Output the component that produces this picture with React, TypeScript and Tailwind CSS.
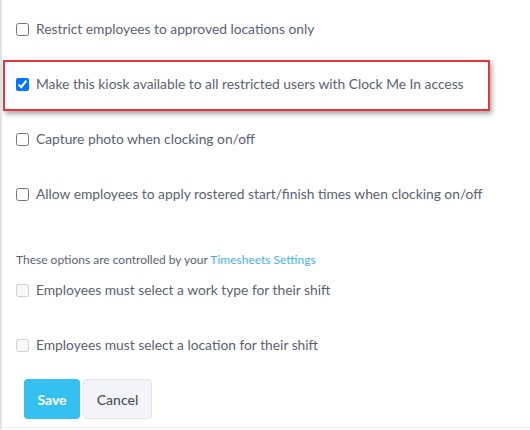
import { useState } from "react";

type Opt = { id: string; label: string; checked?: boolean; disabled?: boolean };

function CheckRow({ opt, onToggle }: { opt: Opt; onToggle: () => void }) {
  return (
    <label className="flex items-center h-5 gap-[7px] cursor-pointer">
      <input
        type="checkbox"
        checked={!!opt.checked}
        disabled={opt.disabled}
        onChange={onToggle}
        className="w-[13px] h-[13px] m-0 shrink-0"
      />
      <span className="text-[13.8px] text-[#5b6270]">{opt.label}</span>
    </label>
  );
}

export default function App() {
  const [opts, setOpts] = useState<Record<string, boolean>>({
    restrict: false,
    kiosk: true,
    photo: false,
    rostered: false,
    worktype: false,
    location: false,
  });
  const toggle = (k: string) => setOpts((o) => ({ ...o, [k]: !o[k] }));

  return (
    <div
      className="w-[530px] h-[430px] bg-white border-l-2 border-[#e3e3e3] overflow-hidden"
      style={{ fontFamily: "Lato, 'Open Sans', sans-serif" }}
    >
      <div className="h-[428px] border-b border-[#ececec] pt-[19px] pl-[14px]">
        {/* Clock Me In options */}
        <CheckRow opt={{ id: "restrict", label: "Restrict employees to approved locations only", checked: opts.restrict }} onToggle={() => toggle("restrict")} />

        <div className="mt-[21px] -ml-[13px] w-[487px] h-[51px] border-2 border-[#e8353b] pl-[11px] pt-[12px] shadow-[2px_3px_5px_rgba(0,0,0,0.35)]">
          <CheckRow
            opt={{ id: "kiosk", label: "Make this kiosk available to all restricted users with Clock Me In access", checked: opts.kiosk }}
            onToggle={() => toggle("kiosk")}
          />
        </div>

        <div className="mt-[18px]">
          <CheckRow opt={{ id: "photo", label: "Capture photo when clocking on/off", checked: opts.photo }} onToggle={() => toggle("photo")} />
        </div>
        <div className="mt-[35px]">
          <CheckRow
            opt={{ id: "rostered", label: "Allow employees to apply rostered start/finish times when clocking on/off", checked: opts.rostered }}
            onToggle={() => toggle("rostered")}
          />
        </div>

        {/* Timesheet-controlled options */}
        <p className="mt-[48px] h-4 leading-4 text-[12px] text-[#5b6270]">
          These options are controlled by your <a className="text-[#3fb4ea]">Timesheets Settings</a>
        </p>
        <div className="mt-[12px]">
          <CheckRow opt={{ id: "worktype", label: "Employees must select a work type for their shift", disabled: true }} onToggle={() => {}} />
        </div>
        <div className="mt-[35px]">
          <CheckRow opt={{ id: "location", label: "Employees must select a location for their shift", disabled: true }} onToggle={() => {}} />
        </div>

        <div className="mt-[24px] ml-[8px] flex gap-[3px]">
          <button className="w-[56px] h-[40px] rounded-[4px] bg-[#35c1ef] text-white text-[14px] font-bold">Save</button>
          <button className="w-[69px] h-[40px] rounded-[4px] bg-[#f3f4f7] border border-[#e3e5ea] text-[#4b505a] text-[14px] font-medium">Cancel</button>
        </div>
      </div>
    </div>
  );
}
